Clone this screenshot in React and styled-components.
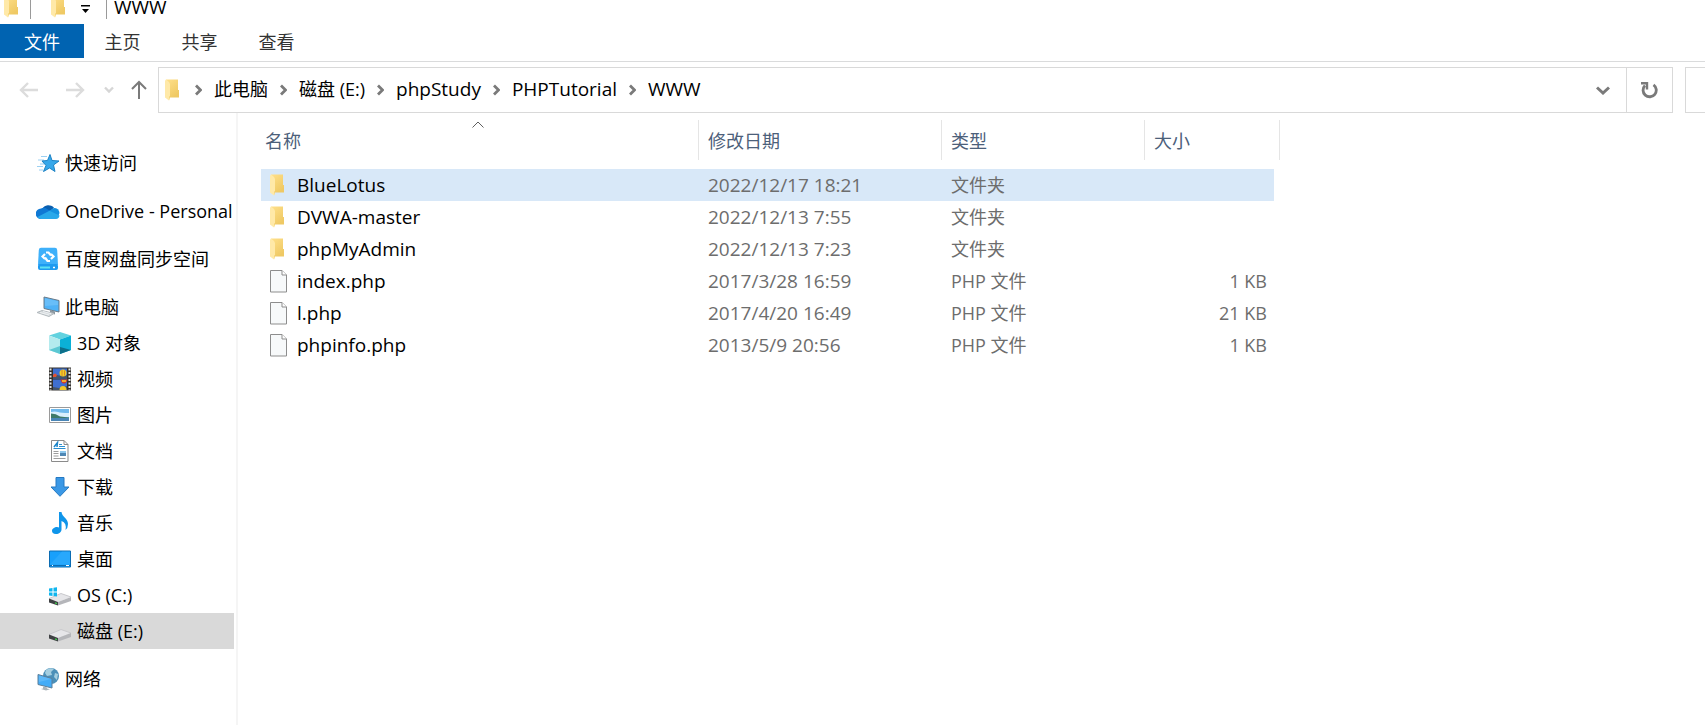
import React from "react";
import styled, { createGlobalStyle } from "styled-components";

const GlobalStyle = createGlobalStyle`
  * { box-sizing: border-box; }
  body {
    margin: 0;
    background: #fff;
    color: #000;
    font-family: "Open Sans", "Noto Sans CJK SC", sans-serif;
    font-size: 18px;
    line-height: 24px;
  }
  button, input { font: inherit; color: inherit; margin: 0; border: 0; padding: 0; background: none; }
  a { color: inherit; text-decoration: none; }
  svg { display: block; flex: none; }
`;

/* ---------- icons ---------- */

const FolderIcon = () => (
  <svg width="15" height="22" viewBox="0 0 15 22" aria-hidden="true">
    <defs>
      <linearGradient id="folderBack" x1="0" y1="0" x2="0.6" y2="1">
        <stop offset="0" stopColor="#ffe08a" />
        <stop offset="1" stopColor="#efc964" />
      </linearGradient>
    </defs>
    <path d="M1 .5H13V11h1V18.500H4Z" fill="url(#folderBack)" />
    <path d="M0 1.500 1 .5 4 3 5 5V17L4 21.500 0 18.500Z" fill="#ffe9a8" />
    <path d="M4 17.500 5 17V18.500L4 21.500Z" fill="#f6d77c" />
  </svg>
);

const FileIcon = () => (
  <svg width="18" height="23" viewBox="0 0 18 23" aria-hidden="true">
    <path d="M.5.5H12L16.500 5V22H.5Z" fill="#f7f9fa" stroke="#8d8d8d" />
    <path d="M12 .5V5h4.500" fill="#fff" stroke="#8d8d8d" />
  </svg>
);

const BackIcon = () => (
  <svg width="20" height="16" viewBox="0 0 20 16" fill="none" stroke="#dcdcdc" strokeWidth="2.400">
    <path d="M19 8H2M9 1 2 8l7 7" />
  </svg>
);
const ForwardIcon = () => (
  <svg width="20" height="16" viewBox="0 0 20 16" fill="none" stroke="#dcdcdc" strokeWidth="2.400">
    <path d="M1 8h17M11 1l7 7-7 7" />
  </svg>
);
const RecentIcon = () => (
  <svg width="10" height="8" viewBox="0 0 10 8" fill="none" stroke="#d6d6d6" strokeWidth="2.400">
    <path d="M1 1.500 5 5.500 9 1.500" />
  </svg>
);
const UpIcon = () => (
  <svg width="16" height="20" viewBox="0 0 16 20" fill="none" stroke="#7a7a7a" strokeWidth="2">
    <path d="M8 19V2M1 9 8 2l7 7" />
  </svg>
);
const CrumbIcon = () => (
  <svg width="7" height="12" viewBox="0 0 7 12" fill="none" stroke="#7a7a7a" strokeWidth="2.800">
    <path d="M1 1.500 5.500 6 1 10.500" />
  </svg>
);
const DropIcon = () => (
  <svg width="14" height="9" viewBox="0 0 14 9" fill="none" stroke="#7a7a7a" strokeWidth="3">
    <path d="M1 1.500 7 7 13 1.500" />
  </svg>
);
const RefreshIcon = () => (
  <svg width="17" height="17" viewBox="0 0 17 17" fill="none" stroke="#7a7a7a" strokeWidth="2.800">
    <path d="M12.500 2.800A6.600 6.600 0 1 1 4 3.500" />
    <path d="M0 1.300H6V7.500" strokeWidth="2.400" />
  </svg>
);
const SortIcon = () => (
  <svg width="12" height="7" viewBox="0 0 12 7" fill="none" stroke="#5e5e5e">
    <path d="M.5 6.500 6 1l5.500 5.500" />
  </svg>
);
const CustomizeIcon = () => (
  <svg width="10" height="9" viewBox="0 0 10 9" aria-hidden="true">
    <path d="M0 0h9v1.500H0zM1 4h7L4.500 8z" fill="#000" />
  </svg>
);

const StarIcon = () => (
  <svg width="24" height="22" viewBox="0 0 24 22">
    <path d="M5 4.500h6M2 8h6M4 12h4M1 14.500h6M3 18h4" stroke="#9bd0f2" strokeWidth="1" />
    <path d="M14 2.500 16 8.500l7 .5-5.500 4 1.500 6.500-5.500-3.500-6 3.500 2.500-6-4-4.500 5.500-.5Z" fill="#37a8ea" stroke="#1c82c4" strokeWidth="1" />
  </svg>
);
const CloudIcon = () => (
  <svg width="24" height="16" viewBox="0 0 24 16">
    <path d="M6 6A7 6.500 0 0 1 18 4.800L12 10Z" fill="#0a5fb0" />
    <path d="M5 16A5 5 0 0 1 5 5.500a6 6 0 0 1 4.500-.5L16 9Z" fill="#0f78d4" />
    <path d="M13 8 18 5a5.300 5.300 0 0 1 5.500 5L22 14Z" fill="#1490df" />
    <path d="M1.500 14 13.500 7.800 23.500 12.500A4 4 0 0 1 20 16H5A5 5 0 0 1 1.500 14Z" fill="#28a8ea" />
  </svg>
);
const BaiduIcon = () => (
  <svg width="24" height="24" viewBox="0 0 24 24">
    <path d="M5 .8h14Q21 .8 21.200 3L22 18H2L2.800 3Q3 .8 5 .8Z" fill="#3eb0fa" />
    <rect x="2" y="17" width="20" height="6" rx="2" fill="#1e9bf0" />
    <path d="M4 20.500h10" stroke="#5ce1f3" strokeWidth="2" />
    <path d="M17 20.500h2" stroke="#fff" strokeWidth="1.500" />
    <path d="M10 5.500h2.500l2.500 3M9 7 6.500 9.500 9 12M15 7l2.500 2.500L15 12M9 10.500l2.500 3.500H14" fill="none" stroke="#fff" strokeWidth="2.200" />
  </svg>
);
const ComputerIcon = () => (
  <svg width="24" height="22" viewBox="0 0 24 22">
    <path d="M8 1 23 4.500V16L8 12.500Z" fill="#4fb2f7" stroke="#6a7a88" strokeWidth="1" />
    <path d="M9 2.300 22 5.300V9L9 10Z" fill="#8ed0fc" opacity=".4" />
    <path d="M14 14v3l5 1.500v-3Z" fill="#8c979f" />
    <path d="M1 16.500 6 14.500 18 17.500 13 20.500Z" fill="#d5dadd" stroke="#b3babe" strokeWidth="1" />
    <path d="m4 16.500 9 2.500M7 15.500l8 2.200" stroke="#eef1f3" strokeWidth="1" />
  </svg>
);
const CubeIcon = () => (
  <svg width="24" height="22" viewBox="0 0 24 22">
    <path d="M1 3.500 12 0l11 3.500L12 7.500Z" fill="#62d2df" />
    <path d="M1 3.500 12 7.500V22L1 18Z" fill="#b4ebee" />
    <path d="m1 18 11-4V22Z" fill="#5cc8d3" />
    <path d="M12 7.500 23 3.500V18L12 22Z" fill="#0bb0d6" />
    <path d="m12 15 11 3-11 4Z" fill="#0e6f8a" />
  </svg>
);
const VideoIcon = () => (
  <svg width="24" height="24" viewBox="0 0 24 24">
    <path d="M1 .5h22v23H1z" fill="#33312e" />
    <path d="M5 1.500h14v10H5zM5 12.500h14v10.500H5z" fill="#3f6fd0" />
    <path d="M5 9l4-1 4 1 6-1v3.500H5zM5 20l6 1 8-2v4H5z" fill="#44546a" />
    <circle cx="15" cy="6" r="3.500" fill="#f2ce25" />
    <path d="M14 3v6M16.500 3.500v5" stroke="#d8862a" strokeWidth="1" />
    <path d="M5 8q2-3 4 0l-1 2H5z" fill="#e25232" />
    <path d="M12.500 12.500h7q-1 4-3.500 4t-3.500-4Z" fill="#d83a28" />
    <path d="M14 14h4" stroke="#f5d52e" strokeWidth="1.500" />
    <path d="M11.500 23q0-4 3.500-4t3.500 4Z" fill="#f2c828" />
    <path d="M2.500 1.500v22M21.500 1.500v22" stroke="#e5e5e5" strokeWidth="2" strokeDasharray="2 1.500" />
  </svg>
);
const PictureIcon = () => (
  <svg width="24" height="18" viewBox="0 0 24 18">
    <path d="M1.500 1.500h21v15h-21z" fill="#fff" stroke="#9a9a9a" />
    <path d="M3 3h18v12H3z" fill="#6fb9ec" />
    <path d="M3 6q4-1 7 0t11 1v4H3z" fill="#d9effc" />
    <path d="M3 7.500q5 0 9 3l9 1v1H3z" fill="#3f7a68" />
    <path d="M3 12h18v3H3z" fill="#4a86b6" />
  </svg>
);
const DocumentIcon = () => (
  <svg width="24" height="24" viewBox="0 0 24 24">
    <path d="M3.500 1.500H16l4 4v17H3.500Z" fill="#fff" stroke="#8b8b8b" />
    <path d="M16 1.500v4h4" fill="none" stroke="#8b8b8b" />
    <path d="m6 8 3.500-4.500L9 8" fill="none" stroke="#1b84c9" strokeWidth="1.500" />
    <path d="M11 5.500h3M11 7.500h6M5.500 9.500h12" stroke="#2b8fd0" />
    <path d="M5.500 12.500h5M5.500 14.500h5M5.500 17h5M5.500 19.500h12" stroke="#9c9c9c" />
    <path d="M12 12h6v5h-6z" fill="#4f88b5" />
    <path d="M12 12h6v2h-6z" fill="#8ec8ee" />
  </svg>
);
const DownloadIcon = () => (
  <svg width="24" height="20" viewBox="0 0 24 20">
    <path d="M8 .5h8v9.500h5L12 19.300 3 10h5Z" fill="#3a98e6" stroke="#2579c2" strokeWidth="1" />
  </svg>
);
const MusicIcon = () => (
  <svg width="24" height="24" viewBox="0 0 24 24">
    <path d="M11 1h2.500C14 6 20 7.500 20 13q0 4-2.500 6Q19 12 13.500 10V18.500C13.500 21 11 23 8 23s-4-1.500-4-3.300S6.500 16 9 16q1.300 0 2 .5Z" fill="#0f95ea" />
  </svg>
);
const DesktopIcon = () => (
  <svg width="24" height="18" viewBox="0 0 24 18">
    <path d="M1.500 1h21v16h-21z" fill="#18a0fb" stroke="#0b6cb3" />
    <path d="M2 14.500 14 1.500h8v13z" fill="#42b4ff" opacity=".4" />
    <path d="M2 15.500h20" stroke="#0b6cb3" />
    <path d="M4 15.500h1M18 15.500h3" stroke="#fff" />
  </svg>
);
const DriveIcon = ({ system }) => (
  <svg width="24" height="24" viewBox="0 0 24 24">
    <path d="M1 15.500 13 10.500l10 3.500-13 5Z" fill="#e6e6e9" />
    <path d="M1 15.500 13 10.500l10 3.500" fill="none" stroke="#c9c9cd" strokeWidth="1" />
    <path d="M10 19 23 14V18L10 22.500Z" fill="#b5b6ba" />
    <path d="M1 15.500 10 19v3.500L1 19.500Z" fill="#3f4144" />
    <path d="M7 19.300 9 20v1.200l-2-.7Z" fill="#3ed24b" />
    {system && (
      <path d="M1 5.500 4.500 5v3.500H1ZM5.500 4.800 9 4.200V8.500H5.500ZM1 9.500h3.500V13L1 12.500ZM5.500 9.500H9v4l-3.500-.5Z" fill="#0fb5ee" />
    )}
  </svg>
);
const NetworkIcon = () => (
  <svg width="24" height="24" viewBox="0 0 24 24">
    <circle cx="15" cy="9" r="8" fill="#4b8fb8" />
    <path d="M10 3q4-3 8-1l-3 3 1 3-5 1-2-3ZM19 6l3 1-1 6-3-3Z" fill="#a5cee0" />
    <path d="m2 7.500 14 4V21L2 17.500Z" fill="#43acf7" stroke="#5d7f99" strokeWidth="1" />
    <path d="m3 8.500 12 3.500-12 3Z" fill="#86cbfb" opacity=".4" />
    <path d="m7 19.500 4 1v1l3 .8-4 1.200-5-1.500 2-.5Z" fill="#aab4ba" />
  </svg>
);

/* ---------- window chrome ---------- */

const Window = styled.div`
  display: flex;
  flex-direction: column;
  min-height: 100vh;
  overflow: hidden;
`;

const TitleBar = styled.header`
  display: flex;
  align-items: center;
  height: 24px;
  padding: 0 4px 10px;
`;

const QuickTools = styled.div`
  display: flex;
  align-items: center;
  height: 14px;
`;

const Divider = styled.span`
  width: 1px;
  height: 24px;
  margin: 0 ${(p) => (p.$wide ? 20 : 7)}px 0 ${(p) => (p.$wide ? 11 : 15)}px;
  background: #9a9a9a;
`;

const CustomizeButton = styled.button`
  margin-left: 15px;
  padding-top: 4px;
`;

const Title = styled.h1`
  margin: 0;
  font-size: 19px;
  font-weight: 400;
  line-height: 24px;
`;

const Ribbon = styled.nav`
  display: flex;
  height: 38px;
  padding-bottom: 3px;
  border-bottom: 1px solid #dadbdc;
`;

const Tab = styled.button`
  width: ${(p) => (p.$primary ? 84 : 77)}px;
  padding-top: 2px;
  background: ${(p) => (p.$primary ? "#0063b1" : "transparent")};
  color: ${(p) => (p.$primary ? "#fff" : "#333")};
`;

const AddressRow = styled.div`
  display: flex;
  align-items: stretch;
  height: 51px;
  padding-top: 5px;
`;

const History = styled.div`
  display: flex;
  align-items: center;
  width: 158px;
  padding-left: 19px;
`;

const HistoryButton = styled.button`
  display: flex;
  margin-right: ${(p) => p.$gap || 0}px;
`;

const AddressBox = styled.div`
  display: flex;
  flex: 1;
  min-width: 0;
  border: 1px solid #d9d9d9;
`;

const Crumbs = styled.div`
  display: flex;
  flex: 1;
  align-items: center;
  gap: 12px;
  min-width: 0;
  padding-left: 6px;
  white-space: nowrap;
`;

const CrumbLead = styled.span`
  margin-right: 3px;
`;

const Crumb = styled.button`
  padding-bottom: 2px;
  font-size: ${(p) => (p.$latin ? 19 : 18)}px;
`;

const BoxButton = styled.button`
  display: flex;
  align-items: center;
  justify-content: center;
  width: ${(p) => p.$width}px;
  border-left: ${(p) => (p.$divided ? "1px solid #d9d9d9" : "0")};
`;

const Search = styled.input`
  width: 20px;
  margin-left: 12px;
  border: 1px solid #d9d9d9;
  border-right: 0;
`;

/* ---------- navigation pane ---------- */

const Body = styled.div`
  display: flex;
  flex: 1;
`;

const Pane = styled.nav`
  flex: none;
  width: 238px;
  padding: 32px 2px 0 0;
  border-right: 2px solid #f5f5f5;
`;

const Group = styled.ul`
  margin: 0 0 12px;
  padding: 0;
  list-style: none;
`;

const NavLink = styled.a`
  display: flex;
  align-items: center;
  gap: 5px;
  height: 36px;
  padding-left: ${(p) => (p.$nested ? 48 : 36)}px;
  overflow: hidden;
  white-space: nowrap;
  background: ${(p) => (p.$selected ? "#d9d9d9" : "transparent")};
`;

/* ---------- file list ---------- */

const Main = styled.main`
  flex: 1;
  min-width: 0;
  padding: 7px 0 0 23px;
`;

const Files = styled.table`
  width: 1019px;
  table-layout: fixed;
  border-collapse: collapse;
`;

const HeadCell = styled.th`
  padding: 0 0 9px;
  font-weight: 400;
`;

const SortButton = styled.button`
  position: relative;
  display: block;
  width: 100%;
  height: 40px;
  padding-top: 2px;
  padding-left: ${(p) => (p.$first ? 4 : 9)}px;
  border-right: 1px solid #e5e5e5;
  color: #4c607a;
  text-align: left;
`;

const SortMark = styled.span`
  position: absolute;
  top: 1px;
  left: 50%;
  margin-left: -8px;
`;

const Row = styled.tr`
  height: 32px;
`;

const Cell = styled.td`
  padding: 0 ${(p) => (p.$right ? 7 : 0)}px 0 9px;
  background: ${(p) => (p.$selected ? "#d8e8f8" : "transparent")};
  color: ${(p) => (p.$name ? "#000" : "#6d6d6d")};
  font-size: ${(p) => (p.$latin ? 19 : 18)}px;
  text-align: ${(p) => (p.$right ? "right" : "left")};
  white-space: nowrap;
`;

const FileName = styled.span`
  display: flex;
  align-items: center;
`;

const FileGlyph = styled.span`
  width: 27px;
`;

const groups = [
  [{ label: "快速访问", Icon: StarIcon }],
  [{ label: "OneDrive - Personal", Icon: CloudIcon }],
  [{ label: "百度网盘同步空间", Icon: BaiduIcon }],
  [
    { label: "此电脑", Icon: ComputerIcon },
    { label: "3D 对象", Icon: CubeIcon, nested: true },
    { label: "视频", Icon: VideoIcon, nested: true },
    { label: "图片", Icon: PictureIcon, nested: true },
    { label: "文档", Icon: DocumentIcon, nested: true },
    { label: "下载", Icon: DownloadIcon, nested: true },
    { label: "音乐", Icon: MusicIcon, nested: true },
    { label: "桌面", Icon: DesktopIcon, nested: true },
    { label: "OS (C:)", Icon: DriveIcon, nested: true, system: true },
    { label: "磁盘 (E:)", Icon: DriveIcon, nested: true, selected: true },
  ],
  [{ label: "网络", Icon: NetworkIcon }],
];

const crumbs = [
  { name: "此电脑" },
  { name: "磁盘 (E:)" },
  { name: "phpStudy", latin: true },
  { name: "PHPTutorial", latin: true },
  { name: "WWW", latin: true },
];

const files = [
  { name: "BlueLotus", date: "2022/12/17 18:21", type: "文件夹", folder: true, selected: true },
  { name: "DVWA-master", date: "2022/12/13 7:55", type: "文件夹", folder: true },
  { name: "phpMyAdmin", date: "2022/12/13 7:23", type: "文件夹", folder: true },
  { name: "index.php", date: "2017/3/28 16:59", type: "PHP 文件", size: "1 KB" },
  { name: "l.php", date: "2017/4/20 16:49", type: "PHP 文件", size: "21 KB" },
  { name: "phpinfo.php", date: "2013/5/9 20:56", type: "PHP 文件", size: "1 KB" },
];

export default function App() {
  return (
    <Window>
      <GlobalStyle />
      <TitleBar>
        <QuickTools>
          <FolderIcon />
          <Divider $wide />
          <FolderIcon />
          <CustomizeButton aria-label="自定义快速访问工具栏">
            <CustomizeIcon />
          </CustomizeButton>
          <Divider />
        </QuickTools>
        <Title>WWW</Title>
      </TitleBar>

      <Ribbon>
        <Tab $primary>文件</Tab>
        <Tab>主页</Tab>
        <Tab>共享</Tab>
        <Tab>查看</Tab>
      </Ribbon>

      <AddressRow>
        <History>
          <HistoryButton $gap={26} aria-label="后退"><BackIcon /></HistoryButton>
          <HistoryButton $gap={19} aria-label="前进"><ForwardIcon /></HistoryButton>
          <HistoryButton $gap={17} aria-label="最近浏览的位置"><RecentIcon /></HistoryButton>
          <HistoryButton aria-label="上移"><UpIcon /></HistoryButton>
        </History>
        <AddressBox>
          <Crumbs>
            <CrumbLead><FolderIcon /></CrumbLead>
            {crumbs.map(({ name, latin }) => (
              <React.Fragment key={name}>
                <CrumbIcon />
                <Crumb $latin={latin}>{name}</Crumb>
              </React.Fragment>
            ))}
          </Crumbs>
          <BoxButton $width={46} aria-label="以前的位置"><DropIcon /></BoxButton>
          <BoxButton $width={46} $divided aria-label="刷新"><RefreshIcon /></BoxButton>
        </AddressBox>
        <Search type="search" aria-label="搜索" />
      </AddressRow>

      <Body>
        <Pane>
          {groups.map((items) => (
            <Group key={items[0].label}>
              {items.map(({ label, Icon, nested, selected, system }) => (
                <li key={label}>
                  <NavLink href="#" $nested={nested} $selected={selected}>
                    <Icon system={system} />
                    {label}
                  </NavLink>
                </li>
              ))}
            </Group>
          ))}
        </Pane>

        <Main>
          <Files>
            <colgroup>
              <col style={{ width: 438 }} />
              <col style={{ width: 243 }} />
              <col style={{ width: 203 }} />
              <col style={{ width: 129 }} />
              <col style={{ width: 6 }} />
            </colgroup>
            <thead>
              <tr>
                <HeadCell>
                  <SortButton $first>
                    名称
                    <SortMark><SortIcon /></SortMark>
                  </SortButton>
                </HeadCell>
                <HeadCell><SortButton>修改日期</SortButton></HeadCell>
                <HeadCell><SortButton>类型</SortButton></HeadCell>
                <HeadCell colSpan={2}><SortButton>大小</SortButton></HeadCell>
              </tr>
            </thead>
            <tbody>
              {files.map((f) => (
                <Row key={f.name}>
                  <Cell $name $latin $selected={f.selected}>
                    <FileName>
                      <FileGlyph>{f.folder ? <FolderIcon /> : <FileIcon />}</FileGlyph>
                      {f.name}
                    </FileName>
                  </Cell>
                  <Cell $latin $selected={f.selected}>{f.date}</Cell>
                  <Cell $selected={f.selected}>{f.type}</Cell>
                  <Cell $right $selected={f.selected}>{f.size}</Cell>
                  <td />
                </Row>
              ))}
            </tbody>
          </Files>
        </Main>
      </Body>
    </Window>
  );
}
